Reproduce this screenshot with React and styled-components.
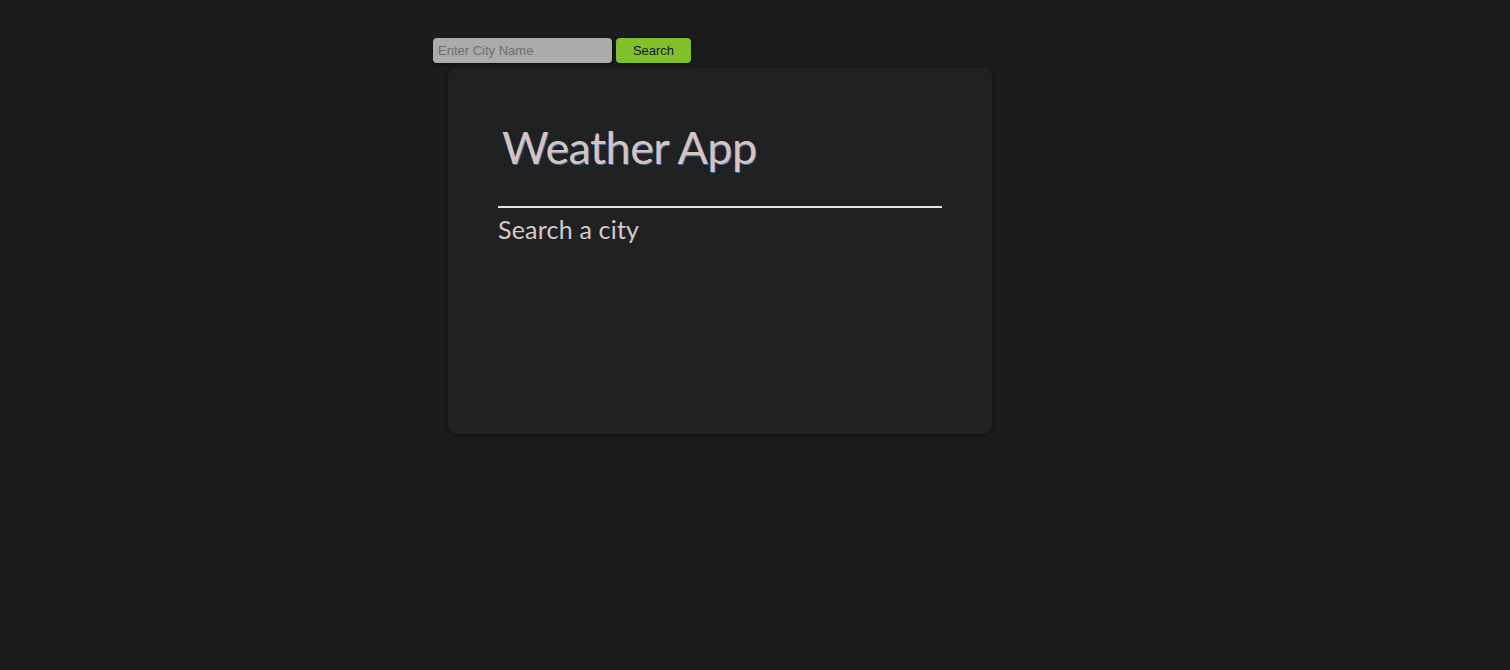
import React from "react";
import styled, { createGlobalStyle } from "styled-components";

const Global = createGlobalStyle`
  html, body { margin: 0; padding: 0; background: #1b1c1e; }
  body { min-height: 670px; font-family: "Lato", "Open Sans", sans-serif; }
`;

const Page = styled.div`
  padding: 38px 0 0 433px;
`;

const SearchForm = styled.form`
  display: flex;
  gap: 4px;
  height: 25px;
`;

const CityInput = styled.input`
  width: 179px;
  height: 25px;
  box-sizing: border-box;
  border: none;
  border-radius: 4px;
  background: #ababab;
  padding: 0 5px;
  font-family: "Liberation Sans", Arial, sans-serif;
  font-size: 13px;
  color: #333;
  box-shadow: 1px 1px 3px rgba(0, 0, 0, 0.6);
  outline: none;
  &::placeholder { color: #6f6f6f; }
`;

const SearchButton = styled.button`
  width: 75px;
  height: 25px;
  border: none;
  border-radius: 4px;
  background: #80c02a;
  color: #111;
  font-family: "Liberation Sans", Arial, sans-serif;
  font-size: 13px;
  box-shadow: 1px 1px 3px rgba(0, 0, 0, 0.6);
  cursor: pointer;
`;

const Card = styled.section`
  margin: 5px 0 0 15px;
  width: 544px;
  height: 366px;
  box-sizing: border-box;
  background: #202123;
  border-radius: 9px;
  box-shadow: 0 2px 4px rgba(0, 0, 0, 0.35);
  padding: 44px 50px 0;
`;

const Title = styled.h1`
  margin: 0 0 0 4px;
  font-family: "Lato", sans-serif;
  font-weight: 400;
  font-size: 45px;
  line-height: 70px;
  color: #d8c2c0;
  text-shadow: 1px 1px 0 #3b6c9a;
  letter-spacing: -0.6px;
`;

const Divider = styled.hr`
  margin: 24px 0 0;
  border: none;
  height: 2px;
  background: #e6e6e6;
`;

const Status = styled.p`
  margin: 5px 0 0;
  font-family: "Lato", sans-serif;
  font-size: 25px;
  line-height: 32px;
  color: #d8c8c6;
  letter-spacing: 0.2px;
`;

export default function App() {
  return (
    <>
      <Global />
      <Page>
        <SearchForm onSubmit={(e) => e.preventDefault()}>
          <CityInput placeholder="Enter City Name" />
          <SearchButton type="submit">Search</SearchButton>
        </SearchForm>
        <Card>
          <Title>Weather App</Title>
          <Divider />
          <Status>Search a city</Status>
        </Card>
      </Page>
    </>
  );
}
